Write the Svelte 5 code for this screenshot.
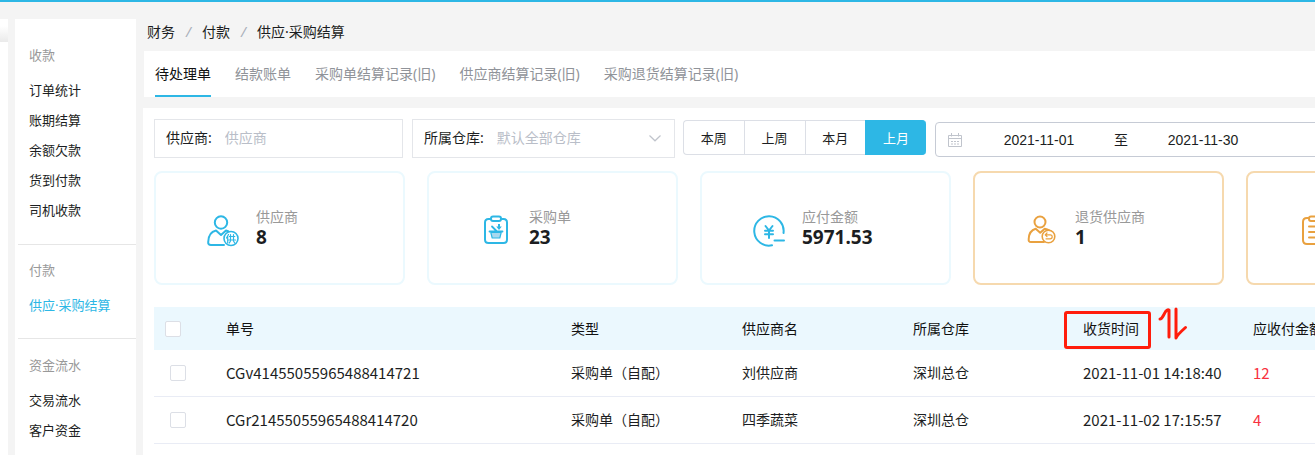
<script>
  const sections = [
    { title: '收款', items: ['订单统计', '账期结算', '余额欠款', '货到付款', '司机收款'] },
    { title: '付款', items: ['供应·采购结算'] },
    { title: '资金流水', items: ['交易流水', '客户资金'] },
  ];
  const current = '供应·采购结算';
  const tabs = ['待处理单', '结款账单', '采购单结算记录(旧)', '供应商结算记录(旧)', '采购退货结算记录(旧)'];
  const periods = ['本周', '上周', '本月', '上月'];
  const cards = [
    { label: '供应商', value: '8', icon: 'supplier' },
    { label: '采购单', value: '23', icon: 'order' },
    { label: '应付金额', value: '5971.53', icon: 'money' },
    { label: '退货供应商', value: '1', icon: 'return', warm: true },
    { label: '', value: '', icon: 'list', warm: true },
  ];
  const rows = [
    { id: 'CGv41455055965488414721', type: '采购单（自配）', supplier: '刘供应商', store: '深圳总仓', time: '2021-11-01 14:18:40', amount: '12' },
    { id: 'CGr21455055965488414720', type: '采购单（自配）', supplier: '四季蔬菜', store: '深圳总仓', time: '2021-11-02 17:15:57', amount: '4' },
  ];
  let tab = $state('待处理单');
  let period = $state('上月');
  let from = $state('2021-11-01');
  let to = $state('2021-11-30');
</script>

<div class="page">
  <div class="rail"><div class="rail-shade"></div></div>

  <nav class="sidebar">
    {#each sections as s}
      <section>
        <h2>{s.title}</h2>
        {#each s.items as item}
          <a href="#top" class:current={item === current}>{item}</a>
        {/each}
      </section>
    {/each}
  </nav>

  <main>
    <div class="crumbs">
      <a href="#top">财务</a><i>/</i><a href="#top">付款</a><i>/</i><span>供应·采购结算</span>
    </div>

    <div class="tabs">
      {#each tabs as t}
        <button class:active={t === tab} onclick={() => (tab = t)}>{t}</button>
      {/each}
    </div>

    <div class="panel">
      <div class="inner">
        <div class="filters">
          <div class="field supplier">
            <label for="supplier">供应商:</label>
            <input id="supplier" type="text" placeholder="供应商" />
          </div>
          <div class="field store">
            <label for="store">所属仓库:</label>
            <select id="store"><option>默认全部仓库</option></select>
            <svg class="chevron" width="14" height="14" viewBox="0 0 14 14"><path d="M1.500 4.500 7 9.800l5.500-5.300" /></svg>
          </div>
          <div class="periods">
            {#each periods as p}
              <button class:active={p === period} onclick={() => (period = p)}>{p}</button>
            {/each}
          </div>
          <div class="range">
            <svg width="14" height="14" viewBox="0 0 14 14">
              <path d="M.5 2.500h13v11H.5zM.5 5.500h13M3.500 0v3.500M10.500 0v3.500" />
              <path d="M3 8.500h2m1 0h2m1 0h2M3 11h2m1 0h2m1 0h2" />
            </svg>
            <input type="text" aria-label="开始日期" bind:value={from} />
            <span>至</span>
            <input type="text" aria-label="结束日期" bind:value={to} />
          </div>
        </div>

        <div class="cards">
          {#each cards as c}
            <div class="card" class:warm={c.warm}>
              <svg class="icon" width="32" height="32" viewBox="0 0 32 32">
                {#if c.icon === 'supplier'}
                  <circle cx="14" cy="7.500" r="6.200" />
                  <path d="M17 30H4c-2 0-3-1-2.800-3 .2-6 3-10.500 7.800-11.500l5 4.500 5-4.500c1.500.3 2.800 1 3.800 2" />
                  <circle cx="24" cy="23.500" r="7" class="thin" />
                  <path class="fine" d="M21.500 19.500 19.500 23M20.700 22v6M23.500 19.500v5.500M26.500 19.500v5.500M22.300 21.500h5.500M21.800 25h6.700M23.500 26l-1.200 2M26.500 26l1.200 2" />
                {:else if c.icon === 'order'}
                  <path d="M11 4H8.500Q5 4 5 7.500v17Q5 28 8.500 28h15q3.500 0 3.500-3.500v-17Q27 4 23.500 4H21" />
                  <rect x="11" y="1.500" width="10" height="4.500" rx="2" />
                  <path class="mid" d="M9.500 16.500h13M12 11.500l4.500 4.500" />
                  <path class="solid" d="M18 9h2v2.500h1.800L19 15l-2.800-3.500H18z" />
                  <path class="basket" d="m10.800 17.500 1.400 5.500h7.600l1.400-5.500z" />
                {:else if c.icon === 'money'}
                  <path d="M19 30.300A14.700 14.700 0 1 1 30.500 18" />
                  <path d="M21.500 25.500h9.500" />
                  <path d="m12.500 11 3.500 4.500 3.500-4.500M12 15.800h8M12 19.300h8M16 15.500v7.500" />
                {:else if c.icon === 'return'}
                  <circle cx="14" cy="7" r="5.500" />
                  <path d="M18 27H5c-2 0-2.500-1-2.300-3 .2-5 2.800-9 7-10.200l4.500 4 4.500-4c4 .8 6 2 7.500 4" />
                  <circle cx="22.500" cy="21.500" r="6.300" class="thin" />
                  <path class="fine" d="m21 18-1.800 1.800 1.800 1.800M19.500 19.800h4.700q2 0 2 2t-2 2H20" />
                {:else}
                  <path d="M10 3H8Q4 3 4 7v18q0 4 4 4h17q4 0 4-4V7q0-4-4-4h-2" />
                  <rect x="10" y="1.500" width="13" height="4.500" rx="2" />
                  <path d="M10 11.500h14M10 17h14M10 22.500h10" />
                {/if}
              </svg>
              <div class="text">
                <div class="label">{c.label}</div>
                <div class="value">{c.value}</div>
              </div>
            </div>
          {/each}
        </div>

        <table>
          <colgroup>
            <col class="c-check" /><col class="c-id" /><col class="c-mid" /><col class="c-mid" />
            <col class="c-end" /><col class="c-end" /><col />
          </colgroup>
          <thead>
            <tr>
              <th class="check"><input type="checkbox" aria-label="全选" /></th>
              <th>单号</th>
              <th>类型</th>
              <th>供应商名</th>
              <th>所属仓库</th>
              <th class="marked">
                收货时间
                <span class="frame"></span>
                <svg class="arrows" width="30" height="34" viewBox="0 0 30 34">
                  <path d="M2 12c2 0 3-3 4.500-5.500C8 3 10 2.500 11 3v27" />
                  <path d="M18 2v29c1-2.500 5-6.500 9.500-10.500" />
                </svg>
              </th>
              <th>应收付金额</th>
            </tr>
          </thead>
          <tbody>
            {#each rows as r}
              <tr>
                <td class="check"><input type="checkbox" aria-label={r.id} /></td>
                <td class="num">{r.id}</td>
                <td>{r.type}</td>
                <td>{r.supplier}</td>
                <td>{r.store}</td>
                <td class="num">{r.time}</td>
                <td class="num red">{r.amount}</td>
              </tr>
            {/each}
          </tbody>
        </table>
      </div>
    </div>
  </main>
</div>

<style>
  :global(body) { background: #f4f4f4; }
  .page {
    box-sizing: border-box;
    min-height: 100vh;
    border-top: 2px solid #2db7e5;
    display: grid;
    grid-template-columns: 8px 121px minmax(0, 1fr);
    column-gap: 7px;
    padding-top: 17px;
    overflow: hidden;
    background: #f4f4f4;
    color: #1c1e22;
    font: 14px/20px "Noto Sans", "Noto Sans CJK SC", sans-serif;
  }
  a { color: inherit; text-decoration: none; }
  button, input, select { font: inherit; color: inherit; margin: 0; }
  input, select { min-width: 0; border: 0; outline: 0; padding: 0; background: none; }

  .rail { background: #fff; }
  .rail-shade { height: 23px; background: linear-gradient(#fff 30%, #eaeaea); }

  .sidebar { background: #fff; font-size: 13px; line-height: 30px; padding-top: 11px; }
  section { margin-left: 3px; padding: 10px 0 18px 11px; border-bottom: 1px solid #e6e6e6; }
  section:first-child { padding-bottom: 19px; }
  section:last-child { border-bottom: 0; padding-top: 11px; padding-bottom: 8px; }
  h2 { margin: 0 0 5px; font: inherit; color: #999; }
  section a { display: block; }
  section a.current { color: #2db7e5; }

  main { display: flex; flex-direction: column; min-width: 0; }
  .crumbs { padding: 3px 0 0 4px; height: 29px; display: flex; }
  .crumbs i { width: 27px; text-align: center; color: #a9afb9; }

  .tabs { display: flex; gap: 24px; height: 46px; margin-left: 1px; padding-left: 11px; background: #fff; white-space: nowrap; }
  .tabs button { border: 0; border-bottom: 2px solid transparent; background: none; padding: 2px 0 0; color: #909399; }
  .tabs button.active { color: #111; border-color: #2db7e5; }

  .panel { margin-top: 11px; padding: 11px 0 11px 11px; background: #fff; overflow: hidden; flex: 1; }
  .inner { min-width: 1343px; }

  .filters { display: flex; align-items: flex-start; }
  .field { box-sizing: border-box; height: 39px; display: flex; align-items: center; gap: 13px; padding: 0 12px 1px 11px; border: 1px solid #e4e6ea; margin-right: 9px; }
  .field label { white-space: nowrap; }
  .field input { flex: 1; }
  .supplier { width: 249px; }
  .store { width: 263px; margin-right: 8px; }
  .store select { flex: 1; appearance: none; color: #b9bec8; }
  input::placeholder { color: #b9bec8; opacity: 1; }
  .chevron { fill: none; stroke: #c0c4cc; stroke-width: 1.200; }

  .periods { display: flex; width: 243px; margin: 1px 9px 0 0; }
  .periods button { box-sizing: border-box; flex: 1; height: 35px; padding: 0; background: #fff; border: 1px solid #dcdfe6; border-right-width: 0; font-size: 13px; }
  .periods button:first-child { border-radius: 4px 0 0 4px; }
  .periods button:last-child { border-radius: 0 4px 4px 0; }
  .periods button.active { background: #2db7e5; border-color: #2db7e5; color: #fff; }

  .range { box-sizing: border-box; flex: 1; height: 35px; margin-top: 3px; padding-left: 12px; display: flex; align-items: center; border: 1px solid #c6cbd5; border-radius: 4px; font: 14px/20px "Liberation Sans", "Noto Sans CJK SC", sans-serif; }
  .range svg { fill: none; stroke: #c0c4cc; }
  .range input { width: 154px; text-align: center; }
  .range span { width: 10px; display: flex; justify-content: center; white-space: nowrap; }

  .cards { display: flex; gap: 22px; margin: 13px 0 22px; }
  .card { box-sizing: border-box; flex: 1; height: 114px; display: flex; align-items: center; gap: 17px; padding-left: 51px; border: 2px solid #ebf9fe; border-radius: 8px; color: #2db7e5; }
  .card.warm { border-color: #f6d9ae; color: #e9a13f; }
  .icon { margin-top: 5px; fill: none; stroke: currentColor; stroke-width: 2; stroke-linecap: round; stroke-linejoin: round; }
  .icon .thin { fill: #fff; stroke-width: 1.600; }
  .icon .fine { stroke-width: 1.200; }
  .icon .mid { stroke-width: 1.800; }
  .icon .solid { fill: currentColor; stroke: none; }
  .icon .basket { fill: #a8d8ee; stroke-width: 1.200; }
  .text { padding-bottom: 4px; }
  .label { color: #999; line-height: 21px; }
  .value { color: #1c1e22; font: bold 19px/20px "Noto Sans", sans-serif; }

  table { width: 100%; table-layout: fixed; border-collapse: collapse; }
  .c-check { width: 72px; }
  .c-id { width: 345px; }
  .c-mid { width: 171px; }
  .c-end { width: 170px; }
  th, td { padding: 0; text-align: left; font-weight: inherit; white-space: nowrap; }
  th { height: 43px; background: #ebf8fe; color: #111; }
  td { height: 46px; border-bottom: 1px solid #e9ecf5; }
  .num { font-size: 15px; font-family: "Noto Sans CJK SC", sans-serif; }
  .red { color: #f8313e; }
  input[type='checkbox'] { display: block; appearance: none; box-sizing: border-box; width: 16px; height: 16px; border: 1px solid #dcdfe6; border-radius: 2px; background: #fff; }
  th.check { padding-left: 11px; }
  td.check { padding-left: 16px; }
  .marked { position: relative; }
  .frame { position: absolute; box-sizing: border-box; left: -19px; top: 4px; width: 87px; height: 38px; border: 3px solid #ff1d0c; border-radius: 3px; }
  .arrows { position: absolute; left: 75px; top: 0; fill: none; stroke: #ff1d0c; stroke-width: 3; stroke-linecap: round; stroke-linejoin: round; }
</style>
